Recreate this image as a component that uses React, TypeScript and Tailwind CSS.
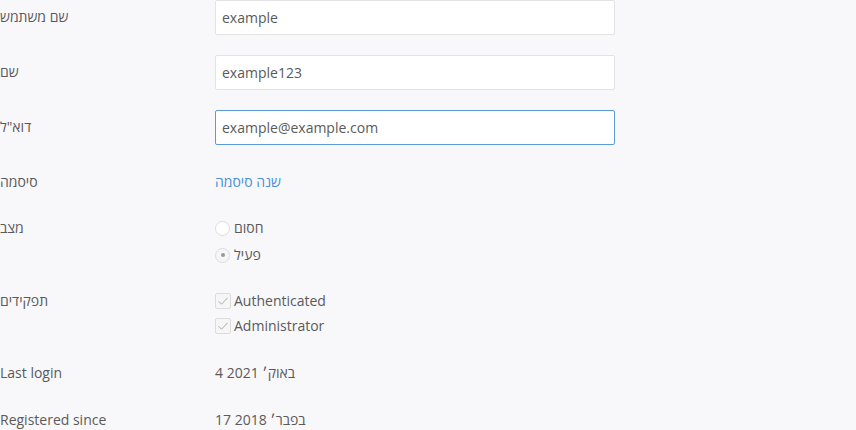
import React from 'react';

// Account edit form rows (label column + field column)
interface RowProps {
  label: string;
  className?: string;
  labelClass?: string;
  children: React.ReactNode;
}

function Row({ label, className = '', labelClass = '', children }: RowProps) {
  return (
    <div className={`flex ${className}`}>
      <div className={`w-[215px] shrink-0 text-[14px] leading-5 text-[#5a5a5a] ${labelClass}`}>{label}</div>
      <div className="w-[400px]">{children}</div>
    </div>
  );
}

function TextField({ value, focused = false }: { value: string; focused?: boolean }) {
  return (
    <div
      className={`h-[35px] w-[400px] rounded-[2px] border bg-white px-[6px] text-[14px] leading-[33px] text-[#5a5a5a] ${
        focused ? 'border-[#5b9bdc]' : 'border-[#e3e3e3]'
      }`}
    >
      {value}
    </div>
  );
}

function Radio({ label, checked = false }: { label: string; checked?: boolean }) {
  return (
    <div className="flex items-center gap-[4px] leading-5">
      <span
        className={`flex h-[15px] w-[15px] items-center justify-center rounded-full border border-[#dcdcdc] ${
          checked ? 'bg-[#f6f6f6]' : 'bg-white'
        }`}
      >
        {checked && <span className="h-[4px] w-[4px] rounded-full bg-[#999]" />}
      </span>
      <span className="text-[14px] text-[#5a5a5a]">{label}</span>
    </div>
  );
}

function Check({ label }: { label: string }) {
  return (
    <div className="flex items-center gap-[3px] leading-5">
      <span className="flex h-[16px] w-[16px] items-center justify-center rounded-[2px] border border-[#dcdcdc] bg-[#f6f6f6]">
        <svg width="12" height="12" viewBox="0 0 12 12" fill="none">
          <path d="M1.5 6.2 L4.5 9.2 L10.5 2.8" stroke="#aaa" strokeWidth="1" />
        </svg>
      </span>
      <span className="text-[14px] text-[#5a5a5a]">{label}</span>
    </div>
  );
}

export default function App() {
  return (
    <div
      className="h-[430px] w-[856px] overflow-hidden bg-[#f8f8fa]"
      style={{ fontFamily: '"Open Sans", "Liberation Sans", sans-serif' }}
    >
      <Row label="שם משתמש" className="mb-5" labelClass="pt-[7px]">
        <TextField value="example" />
      </Row>
      <Row label="שם" className="mb-5" labelClass="pt-[7px]">
        <TextField value="example123" />
      </Row>
      <Row label={'דוא"ל'} className="mb-5" labelClass="pt-[7px]">
        <TextField value="example@example.com" focused />
      </Row>
      <Row label="סיסמה" className="mb-5 h-[33px]" labelClass="pt-[7px]">
        <div className="pt-[7px] text-[14px] leading-5 text-[#4a8fd8]">שנה סיסמה</div>
      </Row>
      <Row label="מצב" className="mb-[26px]">
        <div className="flex flex-col gap-[7px]">
          <Radio label="חסום" />
          <Radio label="פעיל" checked />
        </div>
      </Row>
      <Row label="תפקידים" className="mb-[27px]">
        <div className="flex flex-col gap-[5px]">
          <Check label="Authenticated" />
          <Check label="Administrator" />
        </div>
      </Row>
      <Row label="Last login" className="mb-[27px]">
        <div className="text-[14px] leading-5 text-[#5a5a5a]">4 2021 באוק׳</div>
      </Row>
      <Row label="Registered since">
        <div className="text-[14px] leading-5 text-[#5a5a5a]">17 2018 בפבר׳</div>
      </Row>
    </div>
  );
}
